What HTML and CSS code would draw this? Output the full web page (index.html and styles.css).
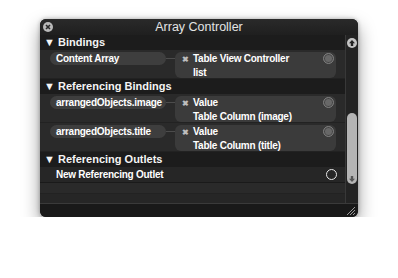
FILE: index.html
```html
<!DOCTYPE html>
<html lang="en">
<head>
    <meta charset="UTF-8">
    <title>Array Controller</title>
    <link rel="stylesheet" href="styles.css">
</head>
<body>

    <div class="window">
        <div class="titlebar">
            <svg class="close" width="10" height="10" viewBox="0 0 10 10">
                <circle cx="5" cy="5" r="5" fill="#b9b9b9"/>
                <path d="M3 3 L7 7 M7 3 L3 7" stroke="#2a2a2a" stroke-width="1.6"/>
            </svg>
            Array Controller
        </div>

        <div class="main">
            <div class="list">
                <div class="section">&#9660; Bindings</div>
                <div class="binding">
                    <div class="pill">Content Array</div>
                    <div class="link"></div>
                    <div class="target">
                        <div class="target-line"><span class="x">&#10006;</span>Table View Controller</div>
                        <div class="target-sub">list</div>
                        <span class="radio"></span>
                    </div>
                </div>

                <div class="section">&#9660; Referencing Bindings</div>
                <div class="binding">
                    <div class="pill">arrangedObjects.image</div>
                    <div class="link"></div>
                    <div class="target">
                        <div class="target-line"><span class="x">&#10006;</span>Value</div>
                        <div class="target-sub">Table Column (image)</div>
                        <span class="radio"></span>
                    </div>
                </div>
                <div class="binding">
                    <div class="pill">arrangedObjects.title</div>
                    <div class="link"></div>
                    <div class="target">
                        <div class="target-line"><span class="x">&#10006;</span>Value</div>
                        <div class="target-sub">Table Column (title)</div>
                        <span class="radio"></span>
                    </div>
                </div>

                <div class="section">&#9660; Referencing Outlets</div>
                <div class="outlet">
                    New Referencing Outlet
                    <span class="radio empty"></span>
                </div>
                <div class="blank"></div>
                <div class="blank short"></div>
            </div>

            <div class="scrollbar">
                <svg class="arrow-up" width="10" height="10" viewBox="0 0 10 10">
                    <circle cx="5" cy="5" r="5" fill="#c4c4c4"/>
                    <path d="M5 2 L8 5.2 L6.2 5.2 L6.2 8 L3.8 8 L3.8 5.2 L2 5.2 Z" fill="#222"/>
                </svg>
                <div class="thumb">
                    <svg class="arrow-down" width="10" height="10" viewBox="0 0 10 10">
                        <path d="M5 8 L8 4.8 L6.2 4.8 L6.2 2 L3.8 2 L3.8 4.8 L2 4.8 Z" fill="#555"/>
                    </svg>
                </div>
            </div>
        </div>

        <div class="footer">
            <svg class="grip" width="9" height="9" viewBox="0 0 9 9">
                <path d="M1 9 L9 1 M4 9 L9 4 M7 9 L9 7" stroke="#9a9a9a" stroke-width="1"/>
            </svg>
        </div>
    </div>

</body>
</html>
```

FILE: styles.css
```css
body {
    margin: 0;
    padding: 0;
    background-color: #ffffff;
    font-family: 'Liberation Sans', Arial, sans-serif;
}

.window {
    width: 318px;
    height: 198px;
    margin: 19px 0 0 40px;
    background-color: #1f1f1f;
    border-radius: 6px;
    overflow: hidden;
    display: flex;
    flex-direction: column;
    box-shadow: 0 8px 18px rgba(0, 0, 0, 0.4), 0 0 4px rgba(0, 0, 0, 0.3);
}

.titlebar {
    height: 16px;
    flex: none;
    position: relative;
    text-align: center;
    font-size: 12.5px;
    line-height: 17px;
    color: #e4e4e4;
    background: linear-gradient(#2a2a2a, #1f1f1f);
}

.close {
    position: absolute;
    left: 3px;
    top: 3px;
}

.main {
    flex: 1;
    display: flex;
    min-height: 0;
}

.list {
    flex: 1;
    border-right: 1px solid #383838;
}

.section {
    height: 15px;
    padding-left: 4px;
    font-size: 11px;
    font-weight: bold;
    line-height: 15px;
    color: #f4f4f4;
    background-color: #1c1c1c;
}

.binding {
    height: 29px;
    display: flex;
    align-items: flex-start;
    padding: 2px 0 0 10px;
    box-sizing: border-box;
    background-color: #2a2a2a;
    border-bottom: 1px solid #222222;
}

.pill {
    width: 116px;
    height: 13px;
    padding-left: 6px;
    box-sizing: border-box;
    border-radius: 7px;
    background-color: #3e3e3e;
    font-size: 10px;
    font-weight: bold;
    line-height: 13px;
    letter-spacing: -0.25px;
    color: #ffffff;
    white-space: nowrap;
}

.link {
    width: 9px;
    height: 1px;
    margin-top: 6px;
    background-color: #4c4c4c;
}

.target {
    width: 161px;
    height: 26px;
    position: relative;
    padding: 0 0 0 7px;
    box-sizing: border-box;
    border-radius: 6px;
    background-color: #3b3b3b;
    font-size: 10px;
    font-weight: bold;
    line-height: 13px;
    letter-spacing: -0.25px;
    color: #ffffff;
}

.target-sub {
    padding-left: 11px;
}

.x {
    display: inline-block;
    width: 11px;
    font-size: 8px;
    color: #bdbdbd;
}

.radio {
    position: absolute;
    right: 2px;
    top: 1px;
    width: 9px;
    height: 9px;
    border-radius: 50%;
    border: 1px solid #7d7d7d;
    background-color: #686868;
    box-shadow: inset 0 0 0 1px #444444;
}

.outlet {
    height: 16px;
    position: relative;
    padding-left: 16px;
    font-size: 10px;
    font-weight: bold;
    line-height: 16px;
    letter-spacing: -0.25px;
    color: #ffffff;
    background-color: #262626;
    border-bottom: 1px solid #1a1a1a;
    box-sizing: border-box;
}

.radio.empty {
    right: 8px;
    top: 2px;
    border: 1px solid #e8e8e8;
    background-color: transparent;
    box-shadow: none;
}

.blank {
    height: 11px;
    background-color: #2a2a2a;
    border-bottom: 1px solid #222222;
    box-sizing: border-box;
}

.blank.short {
    height: 10px;
    background-color: #262626;
    border-bottom: none;
}

.scrollbar {
    width: 12px;
    flex: none;
    position: relative;
    background-color: #232323;
}

.arrow-up {
    position: absolute;
    left: 1px;
    top: 3px;
}

.thumb {
    position: absolute;
    left: 1px;
    top: 78px;
    width: 10px;
    height: 71px;
    border-radius: 5px;
    background-color: #b4b4b4;
}

.arrow-down {
    position: absolute;
    left: 0;
    bottom: 0;
}

.footer {
    height: 13px;
    flex: none;
    position: relative;
    border-top: 1px solid #3a3a3a;
    background-color: #191919;
}

.grip {
    position: absolute;
    right: 3px;
    bottom: 2px;
}
```
